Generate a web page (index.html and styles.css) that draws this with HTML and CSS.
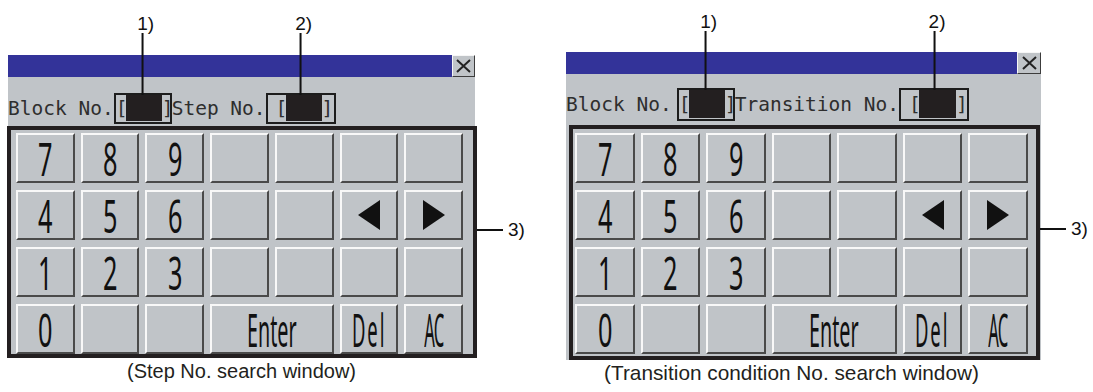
FILE: index.html
```html
<!DOCTYPE html>
<html lang="en">
<head>
<meta charset="utf-8">
<title>Search windows</title>
<link rel="stylesheet" href="styles.css">
</head>
<body>
<div class="page">
  <div class="figure figure--step">
    <div class="win">
      <div class="titlebar">
        <div class="title"></div>
        <div class="close"><svg viewBox="0 0 15 14"><path d="M1 1 L14 13 M14 1 L1 13" stroke="#222" stroke-width="2" fill="none"/></svg></div>
      </div>
      <div class="fields">
        <span class="lbl">Block No.</span>
        <div class="field-box field-box--blk">
          <div class="callout"><span class="callout-text">1)</span><span class="callout-line"></span></div>
          <span class="br">[</span><span class="fill"></span><span class="br br--close">]</span>
        </div>
        <span class="lbl">Step No.</span>
        <div class="field-box field-box--no">
          <div class="callout"><span class="callout-text">2)</span><span class="callout-line"></span></div>
          <span class="br">[</span><span class="fill"></span><span class="br br--close">]</span>
        </div>
      </div>
      <div class="keypad">
        <div class="side-callout"><span class="side-line"></span><span class="side-text">3)</span></div>
        <div class="key"><span class="cap">7</span></div>
        <div class="key"><span class="cap">8</span></div>
        <div class="key"><span class="cap">9</span></div>
        <div class="key"></div>
        <div class="key"></div>
        <div class="key"></div>
        <div class="key"></div>
        <div class="key"><span class="cap">4</span></div>
        <div class="key"><span class="cap">5</span></div>
        <div class="key"><span class="cap">6</span></div>
        <div class="key"></div>
        <div class="key"></div>
        <div class="key"><svg class="arrow" viewBox="0 0 22 30"><polygon points="22,0 22,30 0,15" fill="#111"/></svg></div>
        <div class="key"><svg class="arrow" viewBox="0 0 22 30"><polygon points="0,0 0,30 22,15" fill="#111"/></svg></div>
        <div class="key"><span class="cap">1</span></div>
        <div class="key"><span class="cap">2</span></div>
        <div class="key"><span class="cap">3</span></div>
        <div class="key"></div>
        <div class="key"></div>
        <div class="key"></div>
        <div class="key"></div>
        <div class="key"><span class="cap">0</span></div>
        <div class="key"></div>
        <div class="key"></div>
        <div class="key key--wide"><span class="cap cap--word">Enter</span></div>
        <div class="key"><span class="cap cap--del">Del</span></div>
        <div class="key"><span class="cap cap--ac">AC</span></div>
      </div>
    </div>
    <div class="caption">(Step No. search window)</div>
  </div>

  <div class="figure figure--trans">
    <div class="win">
      <div class="titlebar">
        <div class="title"></div>
        <div class="close"><svg viewBox="0 0 15 14"><path d="M1 1 L14 13 M14 1 L1 13" stroke="#222" stroke-width="2" fill="none"/></svg></div>
      </div>
      <div class="fields">
        <span class="lbl">Block No.</span>
        <div class="field-box field-box--blk field-box--gap">
          <div class="callout"><span class="callout-text">1)</span><span class="callout-line"></span></div>
          <span class="br">[</span><span class="fill"></span><span class="br br--close">]</span>
        </div>
        <span class="lbl">Transition No.</span>
        <div class="field-box field-box--no">
          <div class="callout"><span class="callout-text">2)</span><span class="callout-line"></span></div>
          <span class="br">[</span><span class="fill"></span><span class="br br--close">]</span>
        </div>
      </div>
      <div class="keypad">
        <div class="side-callout"><span class="side-line"></span><span class="side-text">3)</span></div>
        <div class="key"><span class="cap">7</span></div>
        <div class="key"><span class="cap">8</span></div>
        <div class="key"><span class="cap">9</span></div>
        <div class="key"></div>
        <div class="key"></div>
        <div class="key"></div>
        <div class="key"></div>
        <div class="key"><span class="cap">4</span></div>
        <div class="key"><span class="cap">5</span></div>
        <div class="key"><span class="cap">6</span></div>
        <div class="key"></div>
        <div class="key"></div>
        <div class="key"><svg class="arrow" viewBox="0 0 22 30"><polygon points="22,0 22,30 0,15" fill="#111"/></svg></div>
        <div class="key"><svg class="arrow" viewBox="0 0 22 30"><polygon points="0,0 0,30 22,15" fill="#111"/></svg></div>
        <div class="key"><span class="cap">1</span></div>
        <div class="key"><span class="cap">2</span></div>
        <div class="key"><span class="cap">3</span></div>
        <div class="key"></div>
        <div class="key"></div>
        <div class="key"></div>
        <div class="key"></div>
        <div class="key"><span class="cap">0</span></div>
        <div class="key"></div>
        <div class="key"></div>
        <div class="key key--wide"><span class="cap cap--word">Enter</span></div>
        <div class="key"><span class="cap cap--del">Del</span></div>
        <div class="key"><span class="cap cap--ac">AC</span></div>
      </div>
    </div>
    <div class="caption caption--trans">(Transition condition No. search window)</div>
  </div>
</div>
</body>
</html>
```

FILE: styles.css
```css
html, body {
  margin: 0;
  background: #ffffff;
}

body {
  font-family: "Liberation Sans", Arial, sans-serif;
  color: #231f20;
}

.page {
  display: flex;
  align-items: flex-start;
  padding-left: 8px;
  gap: 91px;
}

.figure {
  display: flex;
  flex-direction: column;
}

.figure--step {
  width: 467px;
  padding-top: 55px;
}

.figure--trans {
  width: 475px;
  padding-top: 52px;
}

.win {
  display: flex;
  flex-direction: column;
  background: #c0c4c8;
}

.titlebar {
  display: flex;
  height: 22px;
}

.title {
  flex: 1;
  background: #333399;
}

.close {
  width: 23px;
  box-sizing: border-box;
  border: 1px solid;
  border-color: #f6f6f6 #3c3c3c #3c3c3c #f6f6f6;
  background: #c0c4c8;
  display: flex;
  align-items: center;
  justify-content: center;
}

.figure--trans .close {
  width: 24px;
}

.close svg {
  width: 15px;
  height: 14px;
  display: block;
}

.fields {
  display: flex;
  align-items: stretch;
  box-sizing: border-box;
  font-family: "DejaVu Sans Mono", monospace;
  font-size: 19.5px;
  color: #2e2e2e;
  white-space: pre;
}

.figure--step .fields {
  height: 49px;
  padding: 16px 0 2px;
}

.figure--trans .fields {
  height: 51px;
  padding: 14px 0 4px;
}

.lbl {
  display: flex;
  align-items: center;
}

.field-box {
  position: relative;
  display: flex;
  align-items: center;
  box-sizing: border-box;
  border: 2px solid #1d1d1d;
}

.field-box--blk {
  width: 58px;
}

.field-box--no {
  width: 70px;
  padding-left: 8px;
}

.field-box--gap {
  margin-left: 5px;
}

.br {
  width: 10px;
  text-align: center;
}

.br--close {
  width: 8px;
}

.fill {
  width: 36px;
  align-self: stretch;
  margin-bottom: 1px;
  background: #231f20;
}

.figure--trans .fill {
  width: 37px;
}

.callout {
  position: absolute;
  bottom: 100%;
  left: 50%;
  transform: translateX(-50%);
  display: flex;
  flex-direction: column;
  align-items: center;
  font-family: "Liberation Sans", Arial, sans-serif;
  font-size: 19px;
  line-height: 18px;
  color: #111;
}

.figure--step .callout {
  height: 80px;
}

.figure--trans .callout {
  height: 77px;
}

.callout-text {
  transform: translateX(3px);
}

.callout-line {
  flex: 1;
  width: 2px;
  background: #111;
}

.keypad {
  position: relative;
  box-sizing: border-box;
  display: grid;
  grid-template-columns: repeat(7, 1fr);
  grid-template-rows: repeat(4, 1fr);
  column-gap: 6px;
  row-gap: 7px;
  border: 4px solid #231f20;
  background: #c0c4c8;
}

.figure--step .keypad {
  height: 232px;
  margin: 0 -2px 0 -1px;
  padding: 3px 10px 1px 5px;
}

.figure--trans .keypad {
  height: 235px;
  margin: 0 1px 0 3px;
  padding: 4px 8px 3px 2px;
}

.side-callout {
  position: absolute;
  left: calc(100% + 4px);
  top: 99px;
  display: flex;
  align-items: center;
  height: 2px;
  font-size: 19px;
  color: #111;
}

.side-line {
  width: 26px;
  height: 2px;
  background: #111;
}

.side-text {
  margin-left: 5px;
}

.key {
  min-width: 0;
  box-sizing: border-box;
  border: 2px solid;
  border-color: #f8f8f8 #4a4a4a #4a4a4a #f8f8f8;
  background: #c0c4c8;
  display: flex;
  align-items: center;
  justify-content: center;
}

.key--wide {
  grid-column: span 2;
}

.cap {
  font-family: "Noto Sans", "DejaVu Sans", sans-serif;
  font-weight: 400;
  font-size: 46px;
  line-height: 1;
  color: #111;
  transform: scaleX(0.55);
}

.cap--word {
  transform: scaleX(0.43);
}

.cap--del {
  letter-spacing: 5px;
  transform: scaleX(0.4);
}

.cap--ac {
  letter-spacing: -2px;
  transform: scaleX(0.36);
}

.arrow {
  width: 22px;
  height: 30px;
  display: block;
}

.caption {
  margin-top: 1px;
  text-align: center;
  font-size: 20px;
  line-height: 24px;
  color: #231f20;
}

.caption--trans {
  font-size: 20.8px;
  margin-right: 24px;
}
```
